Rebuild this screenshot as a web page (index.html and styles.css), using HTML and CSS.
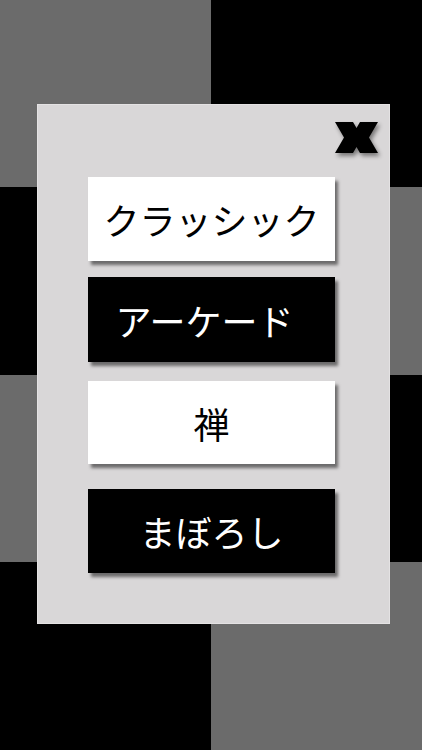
FILE: index.html
```html
<!DOCTYPE html>
<html lang="ja">
<head>
    <meta charset="UTF-8">
    <meta name="viewport" content="width=device-width, initial-scale=1.0">
    <title>モード選択</title>
    <link rel="stylesheet" href="styles.css">
</head>
<body>

    <div class="board">
        <div class="tile gray"></div>
        <div class="tile"></div>
        <div class="tile"></div>
        <div class="tile gray"></div>
        <div class="tile gray"></div>
        <div class="tile"></div>
        <div class="tile"></div>
        <div class="tile gray"></div>
    </div>

    <div class="menu">
        <button class="close" aria-label="閉じる">
            <svg width="43" height="31" viewBox="0 0 43 31">
                <polygon points="0,0 18,0 21.5,6 25,0 43,0 34,15.5 43,31 25,31 21.5,25 18,31 0,31 9,15.5" fill="#000"/>
            </svg>
        </button>

        <div class="modes">
            <button class="mode light">クラッシック</button>
            <button class="mode dark arcade">アーケード</button>
            <button class="mode light zen">禅</button>
            <button class="mode dark phantom">まぼろし</button>
        </div>
    </div>

</body>
</html>
```

FILE: styles.css
```css
body {
    margin: 0;
    font-family: "Noto Sans CJK JP", "Noto Sans", sans-serif;
    background-color: #000;
}

.board {
    display: grid;
    grid-template-columns: 211px 211px;
    grid-template-rows: 187px 188px 187px 188px;
    height: 750px;
}

.tile {
    background-color: #000;
}

.tile.gray {
    background-color: #6b6b6b;
}

.menu {
    position: absolute;
    left: 37px;
    top: 104px;
    width: 351px;
    height: 518px;
    background-color: #d9d7d8;
    border: 1px solid #e4e2e3;
    box-sizing: content-box;
}

.close {
    position: absolute;
    top: 17px;
    right: 11px;
    padding: 0;
    border: none;
    background: none;
    cursor: pointer;
    filter: drop-shadow(2px 3px 2px rgba(0, 0, 0, 0.45));
}

.close svg {
    display: block;
}

.modes {
    display: flex;
    flex-direction: column;
    padding: 72px 0 0 50px;
}

.mode {
    width: 247px;
    height: 84px;
    border: none;
    font-family: inherit;
    font-size: 36px;
    line-height: 1;
    padding: 0;
    cursor: pointer;
    box-shadow: 3px 4px 3px rgba(0, 0, 0, 0.5);
}

.mode.light {
    background-color: #fff;
    color: #000;
}

.mode.dark {
    background-color: #000;
    color: #fff;
}

.mode.arcade {
    margin-top: 16px;
    height: 85px;
    padding-right: 14px;
}

.mode.zen {
    margin-top: 19px;
    height: 83px;
}

.mode.phantom {
    margin-top: 25px;
}
```
